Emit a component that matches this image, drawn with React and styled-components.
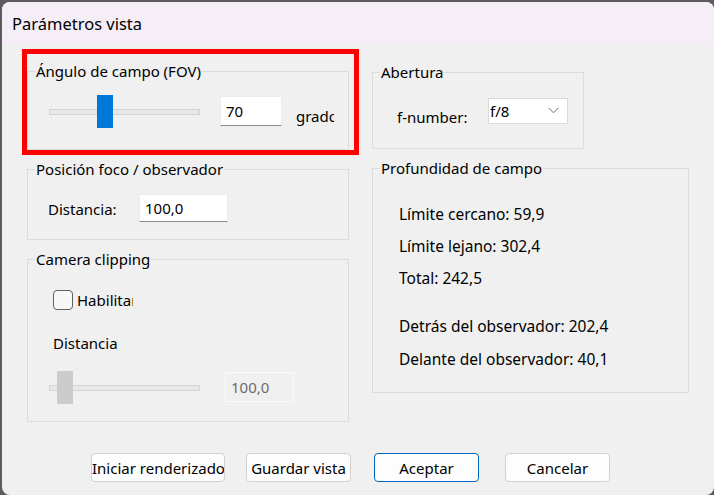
import styled, { createGlobalStyle } from "styled-components";

const GlobalStyle = createGlobalStyle`
  html, body {
    margin: 0;
    padding: 0;
    background: #5c5c5c;
  }
  body {
    font-family: "Noto Sans", "Segoe UI", sans-serif;
    font-size: 15px;
    color: #000;
  }
  #root {
    width: 714px;
    height: 495px;
    overflow: hidden;
  }
`;

const Screen = styled.div`
  width: 714px;
  height: 495px;
  padding: 2px 0 0 2px;
  box-sizing: border-box;
  overflow: hidden;
`;

const Window = styled.div`
  position: relative;
  width: 712px;
  height: 493px;
  border-radius: 8px;
  overflow: hidden;
  background: #f0f0f0;
  display: flex;
  flex-direction: column;
`;

const TitleBar = styled.div`
  height: 42px;
  flex: none;
  background: #f6eef6;
  display: flex;
  align-items: center;
  padding-left: 10px;
  font-size: 16.5px;
`;

const Body = styled.div`
  flex: 1;
  padding: 17px 0 0 25px;
  display: flex;
  flex-direction: column;
`;

const Columns = styled.div`
  display: grid;
  grid-template-columns: 322px 317px;
  column-gap: 23px;
  align-items: start;
`;

const Column = styled.div`
  display: flex;
  flex-direction: column;
  gap: 9px;
  padding-top: ${(p) => p.$top || 0}px;
`;

const Group = styled.fieldset`
  margin: 0;
  padding: 0;
  min-width: 0;
  box-sizing: border-box;
  border: 1px solid #dcdcdc;
  width: ${(p) => p.$w}px;
  height: ${(p) => p.$h}px;
`;

const Legend = styled.legend`
  margin-left: 7px;
  padding: 0 1px;
  font-size: 15px;
  line-height: 20px;
`;

const Row = styled.div`
  display: flex;
  align-items: flex-start;
  margin: ${(p) => p.$mt}px 0 0 ${(p) => p.$ml}px;
`;

const Label = styled.div`
  line-height: 20px;
  white-space: nowrap;
  overflow: hidden;
  margin-top: ${(p) => p.$mt || 0}px;
  margin-left: ${(p) => p.$ml || 0}px;
  width: ${(p) => (p.$w ? `${p.$w}px` : "auto")};
  color: ${(p) => (p.$muted ? "#6d6d6d" : "#000")};
`;

const Slider = styled.div`
  position: relative;
  width: 150px;
  height: 33px;
  flex: none;
  display: flex;
  align-items: center;
`;

const Track = styled.div`
  width: 100%;
  height: 4px;
  background: #e7e7e7;
  border: 1px solid #d4d4d4;
  box-sizing: content-box;
  margin-left: -1px;
`;

const Thumb = styled.div`
  position: absolute;
  top: 0;
  left: ${(p) => p.$left}px;
  width: 16px;
  height: 33px;
  background: ${(p) => (p.$disabled ? "#cccccc" : "#0078d7")};
`;

const TextBox = styled.input`
  flex: none;
  box-sizing: border-box;
  width: ${(p) => p.$w}px;
  height: ${(p) => p.$h}px;
  margin: ${(p) => p.$mt || 0}px 0 0 ${(p) => p.$ml || 0}px;
  padding: 0 0 1px 5px;
  font: inherit;
  font-size: 15px;
  color: #000;
  background: #fff;
  border: 1px solid #ececec;
  border-bottom-color: #8a8a8a;
  outline: none;

  &:disabled {
    background: #f0f0f0;
    color: #6d6d6d;
    border: 1px solid #fafafa;
  }
`;

const Check = styled.span`
  flex: none;
  box-sizing: border-box;
  width: 20px;
  height: 20px;
  border: 1px solid #616161;
  border-radius: 4px;
  background: #f7f7f7;
`;

const Combo = styled.div`
  box-sizing: border-box;
  width: 80px;
  height: 26px;
  background: #fff;
  border: 1px solid #dadada;
  display: flex;
  align-items: center;
  justify-content: space-between;
  padding: 0 8px 1px 1px;
  line-height: 20px;
`;

const Lines = styled.div`
  margin: 26px 0 0 26px;
  display: flex;
  flex-direction: column;
`;

const Line = styled.div`
  font-size: 15.5px;
  line-height: 20px;
  margin-top: ${(p) => p.$gap || 0}px;
`;

const ButtonRow = styled.div`
  display: flex;
  margin: 31px 0 0 64px;
`;

const Button = styled.button`
  flex: none;
  box-sizing: border-box;
  width: ${(p) => p.$w}px;
  height: 29px;
  margin-left: ${(p) => p.$ml || 0}px;
  padding: 0;
  font: inherit;
  font-size: 15px;
  color: #000;
  white-space: nowrap;
  overflow: hidden;
  background: #fdfdfd;
  border: 1px solid ${(p) => (p.$primary ? "#0067c0" : "#d0d0d0")};
  border-radius: 4px;
`;

const Highlight = styled.div`
  position: absolute;
  left: 20px;
  top: 47px;
  width: 337px;
  height: 106px;
  box-sizing: border-box;
  border: 5px solid #ff0000;
  pointer-events: none;
`;

function Chevron() {
  return (
    <svg width="11" height="7" viewBox="0 0 11 7" fill="none">
      <path d="M0.5 0.8 L5.5 5.8 L10.5 0.8" stroke="#6b6b6b" strokeWidth="1" />
    </svg>
  );
}

const depth = [
  { text: "Límite cercano: 59,9", gap: 0 },
  { text: "Límite lejano: 302,4", gap: 12 },
  { text: "Total: 242,5", gap: 12 },
  { text: "Detrás del observador: 202,4", gap: 28 },
  { text: "Delante del observador: 40,1", gap: 13 },
];

const sliderLeft = (value, min, max) => Math.round(((value - min) / (max - min)) * 134);

export default function App() {
  return (
    <>
      <GlobalStyle />
      <Screen>
        <Window>
          <TitleBar>Parámetros vista</TitleBar>
          <Body>
            <Columns>
              <Column>
                <Group $w={322} $h={89}>
                  <Legend>Ángulo de campo (FOV)</Legend>
                  <Row $mt={14} $ml={22}>
                    <Slider>
                      <Track />
                      <Thumb $left={sliderLeft(70, 10, 180)} />
                    </Slider>
                    <TextBox $w={62} $h={30} $mt={1} $ml={20} defaultValue="70" />
                    <Label $mt={11} $ml={14} $w={38}>grados</Label>
                  </Row>
                </Group>

                <Group $w={322} $h={81}>
                  <Legend>Posición foco / observador</Legend>
                  <Row $mt={15} $ml={20}>
                    <Label $mt={5} $w={91}>Distancia:</Label>
                    <TextBox $w={89} $h={28} defaultValue="100,0" />
                  </Row>
                </Group>

                <Group $w={322} $h={173}>
                  <Legend>Camera clipping</Legend>
                  <Row $mt={21} $ml={25}>
                    <Check />
                    <Label $ml={4} $w={56}>Habilitar</Label>
                  </Row>
                  <Row $mt={23} $ml={25}>
                    <Label>Distancia</Label>
                  </Row>
                  <Row $mt={18} $ml={22}>
                    <Slider>
                      <Track />
                      <Thumb $disabled $left={7} />
                    </Slider>
                    <TextBox $w={69} $h={30} $mt={1} $ml={25} defaultValue="100,0" disabled />
                  </Row>
                </Group>
              </Column>

              <Column $top={1}>
                <Group $w={212} $h={87}>
                  <Legend>Abertura</Legend>
                  <Row $mt={16} $ml={24}>
                    <Label $mt={9} $w={91}>f-number:</Label>
                    <Combo>
                      <span>f/8</span>
                      <Chevron />
                    </Combo>
                  </Row>
                </Group>

                <Group $w={317} $h={235}>
                  <Legend>Profundidad de campo</Legend>
                  <Lines>
                    {depth.map((d) => (
                      <Line key={d.text} $gap={d.gap}>
                        {d.text}
                      </Line>
                    ))}
                  </Lines>
                </Group>
              </Column>
            </Columns>

            <ButtonRow>
              <Button $w={134}>Iniciar renderizado</Button>
              <Button $w={105} $ml={21}>Guardar vista</Button>
              <Button $w={105} $ml={23} $primary>Aceptar</Button>
              <Button $w={105} $ml={26}>Cancelar</Button>
            </ButtonRow>
          </Body>
          <Highlight />
        </Window>
      </Screen>
    </>
  );
}
